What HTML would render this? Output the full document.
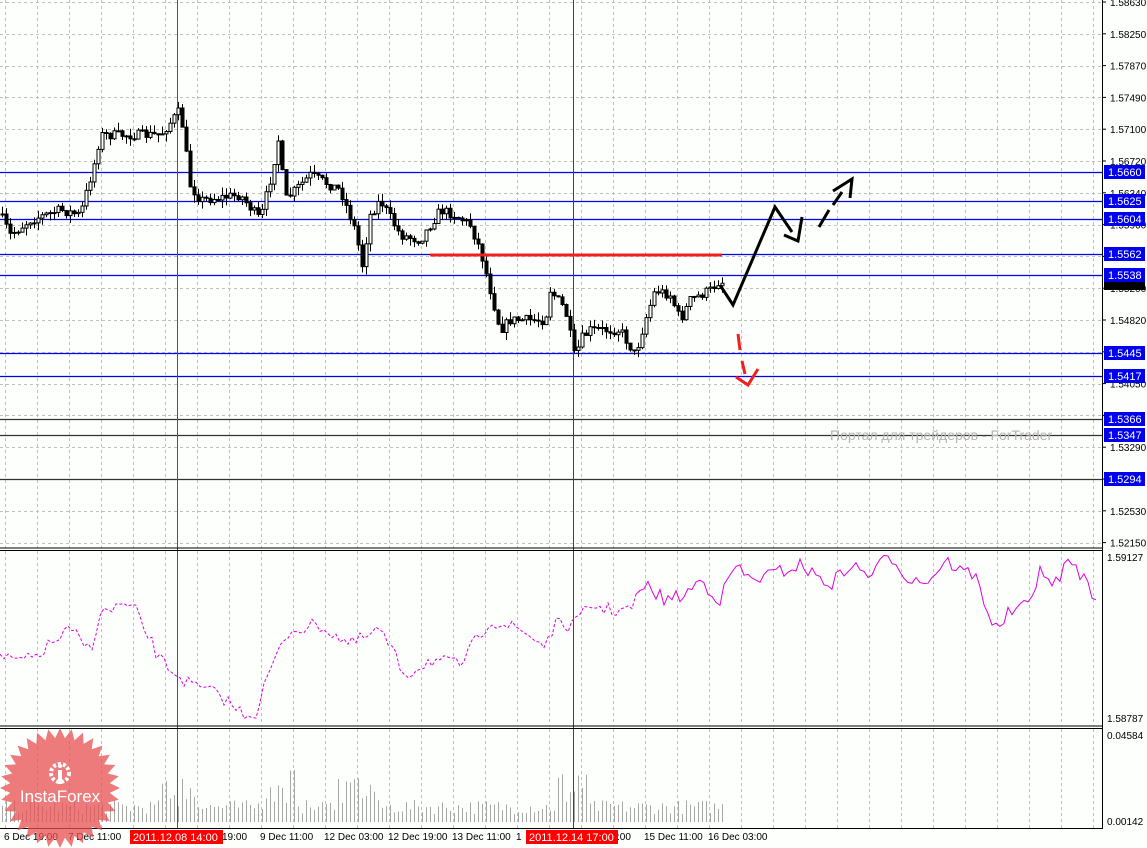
<!DOCTYPE html>
<html><head><meta charset="utf-8"><style>
html,body{margin:0;padding:0;background:#fcfffc;}
svg{display:block;font-family:"Liberation Sans",sans-serif;}
</style></head><body>
<svg id="s" width="1147" height="848" viewBox="0 0 1147 848" xmlns="http://www.w3.org/2000/svg">
<rect width="1147" height="848" fill="#fcfffc"/>
<g id="grid" stroke="#c0c0c0" stroke-dasharray="3,3" stroke-width="1"></g>
<g id="hl" stroke="#0000ee" stroke-width="1.2">
<line x1="0" y1="172.5" x2="1102" y2="172.5"/>
<line x1="0" y1="201.5" x2="1102" y2="201.5"/>
<line x1="0" y1="219.5" x2="1102" y2="219.5"/>
<line x1="0" y1="254.5" x2="1102" y2="254.5"/>
<line x1="0" y1="275.5" x2="1102" y2="275.5"/>
<line x1="0" y1="353.5" x2="1102" y2="353.5"/>
<line x1="0" y1="376.5" x2="1102" y2="376.5"/>
<line x1="0" y1="419.5" x2="1102" y2="419.5" stroke="#333"/>
<line x1="0" y1="435.5" x2="1102" y2="435.5" stroke="#333"/>
<line x1="0" y1="479.5" x2="1102" y2="479.5" stroke="#333"/>
</g>
<line x1="177.5" y1="0" x2="177.5" y2="828" stroke="#555" stroke-width="1"/>
<line x1="573.5" y1="0" x2="573.5" y2="828" stroke="#e00000" stroke-width="1"/>
<text x="830" y="440" font-size="14" fill="#b4b4b4">Портал для трейдеров - ForTrader</text>
<g id="candles"></g>
<g id="vol" stroke="#a8a8a8" stroke-width="1"></g>
<polyline id="ind1" fill="none" stroke="#e000e0" stroke-width="1" stroke-dasharray="3,2"/>
<polyline id="ind2" fill="none" stroke="#e000e0" stroke-width="1"/>
<line x1="430" y1="255" x2="722" y2="255" stroke="#f02020" stroke-width="3"/>
<polyline points="720,285 733,305 775,207 792,232" fill="none" stroke="#000" stroke-width="3"/>
<polyline points="784,235 798,241 802,217" fill="none" stroke="#000" stroke-width="3"/>
<polyline points="819,227 829,210" fill="none" stroke="#000" stroke-width="3"/>
<polyline points="833,205 842,192" fill="none" stroke="#000" stroke-width="3"/>
<polyline points="833,191 852,179 850,198" fill="none" stroke="#000" stroke-width="3"/>
<line x1="738" y1="334" x2="740" y2="350" stroke="#f02020" stroke-width="3"/>
<polyline points="742,361 745,374" fill="none" stroke="#f02020" stroke-width="3"/>
<polyline points="736,377 748,385 758,369" fill="none" stroke="#f02020" stroke-width="3"/>
<line x1="0" y1="548" x2="1102" y2="548" stroke="#000" stroke-width="1"/>
<line x1="0" y1="550.5" x2="1147" y2="550.5" stroke="#000" stroke-width="1"/>
<line x1="0" y1="726" x2="1102" y2="726" stroke="#000"/>
<line x1="0" y1="728.5" x2="1147" y2="728.5" stroke="#000"/>
<rect x="1102" y="0" width="45" height="848" fill="#fcfffc"/>
<line x1="1102.5" y1="0" x2="1102.5" y2="828" stroke="#000"/>
<line x1="0" y1="828.5" x2="1103" y2="828.5" stroke="#000"/>
<g id="axis" font-size="10" fill="#000"></g>
<g id="tags" font-size="11"></g>
<g font-size="10" fill="#000">
<text x="1107" y="561">1.59127</text><text x="1107" y="722">1.58787</text>
<text x="1107" y="739">0.04584</text><text x="1107" y="825">0.00142</text>
<text x="4" y="840">6 Dec 19:00</text><text x="68" y="840">7 Dec 11:00</text>
<text x="222" y="840">19:00</text><text x="260" y="840">9 Dec 11:00</text>
<text x="324" y="840">12 Dec 03:00</text><text x="388" y="840">12 Dec 19:00</text>
<text x="452" y="840">13 Dec 11:00</text><text x="516" y="840">1</text>
<text x="617" y="840">:00</text><text x="644" y="840">15 Dec 11:00</text>
<text x="708" y="840">16 Dec 03:00</text>
</g>
<rect x="130" y="830" width="93" height="14" fill="#f00"/>
<text x="133" y="841" font-size="11" fill="#fff">2011.12.08 14:00</text>
<rect x="526" y="830" width="92" height="14" fill="#f00"/>
<text x="529" y="841" font-size="11" fill="#fff">2011.12.14 17:00</text>
<g opacity="0.75">
<polygon id="star" fill="#e85050"/>
<g fill="#fff">
<circle cx="60" cy="773" r="9" fill="none" stroke="#fff" stroke-width="4" stroke-dasharray="3,2"/>
<rect x="58" y="770" width="4" height="14"/><circle cx="60" cy="766" r="2"/>
</g>
<text x="60" y="802" font-size="17" fill="#fff" text-anchor="middle">InstaForex</text>
</g>
</svg>
<script>
(function(){
var NS="http://www.w3.org/2000/svg";
function el(p,t,a){var e=document.createElementNS(NS,t);for(var k in a)e.setAttribute(k,a[k]);document.getElementById(p).appendChild(e);return e;}
for(var x=5;x<1102;x+=32){el("grid","line",{x1:x+.5,y1:0,x2:x+.5,y2:548});el("grid","line",{x1:x+.5,y1:551,x2:x+.5,y2:726});el("grid","line",{x1:x+.5,y1:729,x2:x+.5,y2:828});}
for(var y=2;y<548;y+=31.8){el("grid","line",{x1:0,y1:Math.round(y)+.5,x2:1102,y2:Math.round(y)+.5});}
var labs=["1.58630","1.58250","1.57870","1.57490","1.57100","1.56720","1.56340","1.55960","1.55580","1.55200","1.54820","1.54440","1.54050","1.53670","1.53290","1.52910","1.52530","1.52150"];
var skip={8:1,11:1,13:1,15:1};
for(var i=0;i<labs.length;i++){var yy=2+i*31.8;el("axis","line",{x1:1102,y1:yy,x2:1106,y2:yy,stroke:"#000"});if(!skip[i]){var t=el("axis","text",{x:1110,y:yy+4});t.textContent=labs[i];}}
var tags=[[172,"1.5660"],[201,"1.5625"],[219,"1.5604"],[254,"1.5562"],[275,"1.5538"],[353,"1.5445"],[376,"1.5417"],[419,"1.5366"],[435,"1.5347"],[479,"1.5294"]];
tags.forEach(function(g){el("tags","rect",{x:1104,y:g[0]-7,width:41,height:14,fill:"#0000ee"});var t=el("tags","text",{x:1108,y:g[0]+4,fill:"#fff"});t.textContent=g[1];});
el("tags","rect",{x:1104,y:282,width:41,height:8,fill:"#000"});
var wp=[[0,215],[10,235],[30,220],[60,210],[80,215],[95,160],[100,135],[120,135],[160,135],[180,110],[190,185],[200,200],[240,195],[260,220],[270,180],[278,140],[285,200],[300,185],[310,175],[340,190],[355,230],[362,265],[370,215],[380,200],[400,235],[420,240],[440,210],[455,215],[470,225],[480,250],[490,290],[500,330],[510,320],[545,320],[550,290],[565,310],[575,360],[580,340],[590,330],[620,330],[635,355],[645,320],[655,290],[670,295],[680,320],[690,300],[710,290],[720,280],[725,285]];
function interp(w,x){for(var i=1;i<w.length;i++){if(x<=w[i][0]){var a=w[i-1],b=w[i];return a[1]+(b[1]-a[1])*(x-a[0])/(b[0]-a[0]);}}return w[w.length-1][1];}
var seed=7;function rnd(){seed=(seed*16807)%2147483647;return seed/2147483647;}
var prev=interp(wp,0);
for(var x=2;x<=724;x+=4){var c=interp(wp,x)+(rnd()-.5)*10;var o=prev;var hi=Math.min(o,c)-rnd()*8;var lo=Math.max(o,c)+rnd()*8;
el("candles","line",{x1:x+.5,y1:hi,x2:x+.5,y2:lo,stroke:"#000"});
var bt=Math.min(o,c),h=Math.max(1,Math.abs(o-c));
el("candles","rect",{x:x-1,y:bt,width:3,height:h,fill:c<o?"#fff":"#000",stroke:"#000","stroke-width":1});prev=c;}
for(var x=2;x<=724;x+=4){var base=8+rnd()*14;if((x>160&&x<200)||(x>255&&x<300)||(x>330&&x<375)||(x>555&&x<590))base+=rnd()*35;el("vol","line",{x1:x+.5,y1:822,x2:x+.5,y2:822-base});}
var ip=[[0,660],[30,660],[70,630],[90,650],[100,615],[120,605],[135,610],[160,660],[190,685],[220,695],[240,712],[255,715],[270,670],[290,630],[320,625],[350,645],[380,630],[405,675],[430,660],[460,665],[490,620],[520,630],[545,645],[555,625],[575,625],[590,605],[610,610],[630,610],[645,585],[665,600],[685,595],[700,580],[720,600],[735,565],[750,580],[770,575],[800,565],[830,585],[850,565],[870,575],[890,555],[910,580],[930,580],[945,560],[960,570],[975,575],[995,630],[1010,612],[1030,605],[1040,565],[1050,590],[1070,560],[1085,580],[1097,603]];
var p1=[],p2=[];for(var x=0;x<=1097;x+=4){var v=interp(ip,x)+(rnd()-.5)*14;var pt=x+","+v.toFixed(1);if(x<=640)p1.push(pt);if(x>=636)p2.push(pt);}
document.getElementById("ind1").setAttribute("points",p1.join(" "));document.getElementById("ind2").setAttribute("points",p2.join(" "));
var pts=[];for(var i=0;i<64;i++){var a=i*Math.PI/32;var r=i%2?50:60;pts.push((60+r*Math.cos(a)).toFixed(1)+","+(788+r*Math.sin(a)).toFixed(1));}
document.getElementById("star").setAttribute("points",pts.join(" "));
})();
</script>
</body></html>
